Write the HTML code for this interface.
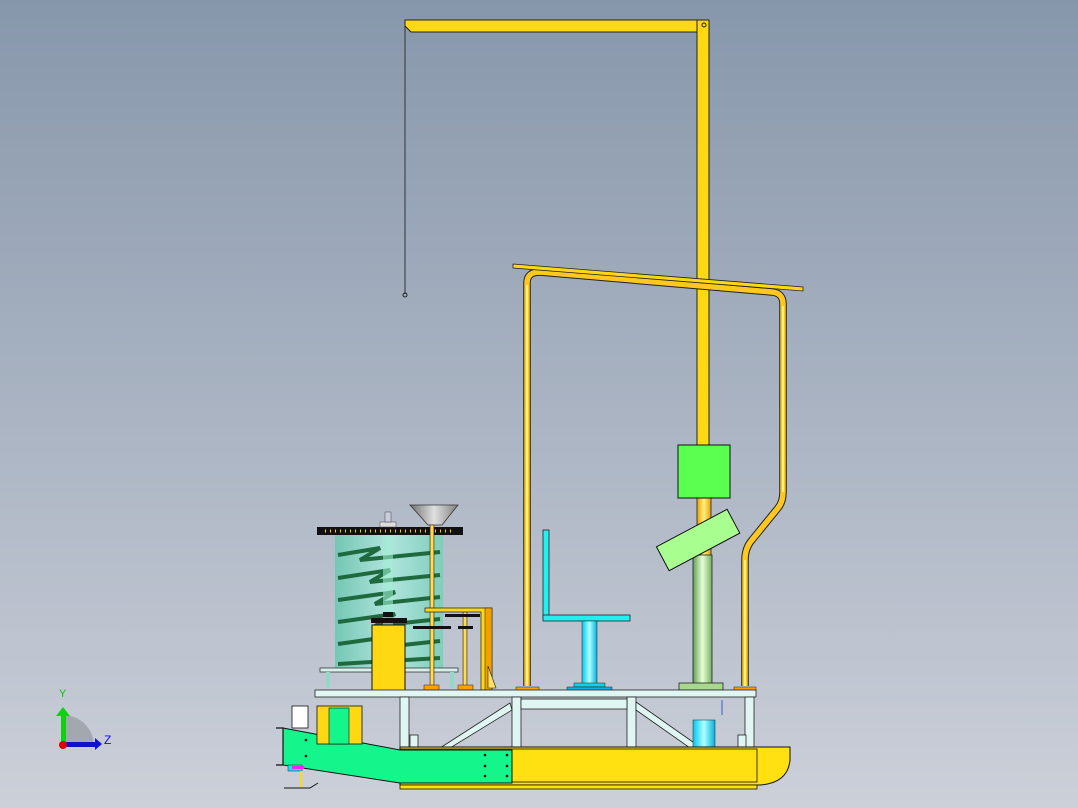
<!DOCTYPE html>
<html><head><meta charset="utf-8"><style>
html,body{margin:0;padding:0;width:1078px;height:808px;overflow:hidden}
svg{display:block}
</style></head><body>
<svg width="1078" height="808" viewBox="0 0 1078 808" xmlns="http://www.w3.org/2000/svg">
<defs>
<linearGradient id="bg" x1="0" y1="0" x2="0" y2="1">
<stop offset="0" stop-color="#8797ab"/><stop offset="0.5" stop-color="#a9b3c2"/><stop offset="1" stop-color="#ccd0d9"/></linearGradient>
<linearGradient id="yp" x1="0" y1="0" x2="1" y2="0">
<stop offset="0" stop-color="#e8a000"/><stop offset="0.5" stop-color="#fff080"/><stop offset="1" stop-color="#e8a000"/></linearGradient>
<linearGradient id="cy" x1="0" y1="0" x2="1" y2="0">
<stop offset="0" stop-color="#00c8f0"/><stop offset="0.5" stop-color="#b0ffff"/><stop offset="1" stop-color="#00b0e0"/></linearGradient>
<linearGradient id="gp" x1="0" y1="0" x2="1" y2="0">
<stop offset="0" stop-color="#60a050"/><stop offset="0.5" stop-color="#e8ffd8"/><stop offset="1" stop-color="#70b060"/></linearGradient>
<linearGradient id="tank" x1="0" y1="0" x2="1" y2="0">
<stop offset="0" stop-color="#6cc8b0"/><stop offset="0.5" stop-color="#b0e8e0"/><stop offset="1" stop-color="#78d0b8"/></linearGradient>
<linearGradient id="fun" x1="0" y1="0" x2="1" y2="0">
<stop offset="0" stop-color="#707070"/><stop offset="0.5" stop-color="#e0e0e0"/><stop offset="1" stop-color="#808080"/></linearGradient>
</defs>
<rect width="1078" height="808" fill="url(#bg)"/>

<line x1="405" y1="26" x2="405" y2="294" stroke="#333" stroke-width="1"/>
<circle cx="405" cy="295" r="2" fill="none" stroke="#222"/>
<polygon points="405,20 709,20 709,32 411,32 405,26" fill="#ffd814" stroke="#222" stroke-width="1"/>
<rect x="697" y="20" width="12" height="426" fill="#ffd814" stroke="#222" stroke-width="1"/>
<circle cx="704" cy="25" r="2" fill="none" stroke="#222"/>

<path d="M527,686 L527,283 Q527,272 540,272 L772,292 Q783,293 783,304 L783,492 Q783,502 778,508 L752,540 Q745,548 745,560 L745,686" fill="none" stroke="#222" stroke-width="7.5"/>
<path d="M527,686 L527,283 Q527,272 540,272 L772,292 Q783,293 783,304 L783,492 Q783,502 778,508 L752,540 Q745,548 745,560 L745,686" fill="none" stroke="#ffc820" stroke-width="5.5"/>
<path d="M527,686 L527,285 M783,492 L783,306 M745,686 L745,560" stroke="#fff080" stroke-width="2"/>
<polygon points="513,264 803,287 803,291 513,268" fill="#ffd814" stroke="#222" stroke-width="0.8"/>

<rect x="697" y="498" width="14" height="60" fill="url(#yp)" stroke="#222" stroke-width="0.8"/>
<rect x="693" y="555" width="19" height="130" fill="url(#gp)" stroke="#222" stroke-width="0.8"/>
<rect x="679" y="683" width="44" height="7" fill="#a8d890" stroke="#222" stroke-width="0.8"/>
<rect x="678" y="445" width="52" height="53" fill="#5aff50" stroke="#111" stroke-width="1"/>
<g transform="rotate(-28 697 540)"><rect x="658" y="527" width="80" height="27" fill="#a8ff90" stroke="#111" stroke-width="1"/></g>

<rect x="543" y="530" width="6" height="88" fill="#20f0f0" stroke="#222" stroke-width="0.8"/>
<rect x="543" y="615" width="87" height="6" fill="#20f0f0" stroke="#222" stroke-width="0.8"/>
<rect x="582" y="621" width="15" height="63" fill="url(#cy)" stroke="#222" stroke-width="0.5"/>
<rect x="574" y="683" width="31" height="4" fill="#10d0f0" stroke="#222" stroke-width="0.5"/>
<rect x="567" y="687" width="45" height="4" fill="#10b0e0" stroke="#222" stroke-width="0.5"/>
<rect x="516" y="687" width="23" height="4" fill="#ffa000" stroke="#222" stroke-width="0.5"/>
<rect x="734" y="687" width="22" height="4" fill="#ffa000" stroke="#222" stroke-width="0.5"/>

<rect x="335" y="535" width="108" height="133" fill="url(#tank)" opacity="0.9"/>
<g stroke="#1e6a3e" stroke-width="4" fill="none">
<path d="M338,555 L380,548 L360,560 L440,552 M338,578 L390,570 L370,582 L440,575 M338,600 L395,592 L375,604 L440,597 M338,622 L395,614 L375,626 L440,619 M338,644 L395,636 L375,648 L440,641 M338,664 L440,658"/>
</g>
<rect x="383" y="535" width="10" height="133" fill="#9ef0d0" opacity="0.6"/>
<rect x="317" y="527" width="146" height="8" fill="#111"/>
<line x1="325" y1="531" x2="455" y2="531" stroke="#ffd000" stroke-width="3" stroke-dasharray="1,4"/>
<rect x="380" y="522" width="16" height="5" fill="#ddd" stroke="#444" stroke-width="0.5"/>
<rect x="385" y="512" width="6" height="10" fill="#ccd" stroke="#444" stroke-width="0.5"/>
<polygon points="410,505 458,505 442,525 428,525" fill="url(#fun)" stroke="#333" stroke-width="0.8"/>
<rect x="320" y="668" width="138" height="4" fill="#d8f0ec" stroke="#222" stroke-width="0.7"/>
<rect x="326" y="672" width="4" height="16" fill="#90d8c8"/>
<rect x="450" y="672" width="4" height="16" fill="#90d8c8"/>
<rect x="430" y="525" width="4" height="162" fill="url(#yp)" stroke="#222" stroke-width="0.5"/>
<rect x="463" y="612" width="4" height="75" fill="url(#yp)" stroke="#222" stroke-width="0.5"/>
<rect x="424" y="685" width="15" height="5" fill="#ffa000" stroke="#222" stroke-width="0.5"/>
<rect x="458" y="685" width="15" height="5" fill="#ffa000" stroke="#222" stroke-width="0.5"/>
<polygon points="425,608 492,608 492,690 481,690 481,612 425,612" fill="#ffd814" stroke="#222" stroke-width="0.7"/>
<rect x="485" y="608" width="7" height="82" fill="#f0a000" stroke="#222" stroke-width="0.5"/>
<polygon points="488,666 496,688 488,688" fill="#ffe060" stroke="#222" stroke-width="0.6"/>
<rect x="413" y="626" width="38" height="3" fill="#111"/>
<rect x="445" y="614" width="35" height="3" fill="#111"/>
<rect x="458" y="626" width="15" height="3" fill="#111"/>
<rect x="372" y="625" width="33" height="66" fill="#ffd814" stroke="#111" stroke-width="1"/>
<rect x="371" y="618" width="36" height="5" fill="#111"/>
<rect x="383" y="612" width="10" height="5" fill="#111"/>

<rect x="315" y="690" width="441" height="7" fill="#e0f6f2" stroke="#222" stroke-width="0.8"/>
<g fill="#e0f6f2" stroke="#222" stroke-width="0.8">
<rect x="400" y="697" width="9" height="52"/>
<rect x="512" y="697" width="9" height="52"/>
<rect x="627" y="697" width="9" height="52"/>
<rect x="745" y="697" width="9" height="52"/>
<rect x="521" y="699" width="106" height="10"/>
<polygon points="440,748 510,703 512,710 450,748"/>
<polygon points="636,702 700,747 690,748 636,710"/>
<rect x="738" y="735" width="8" height="13"/>
<rect x="410" y="735" width="8" height="13"/>
</g>
<rect x="693" y="720" width="22" height="28" fill="url(#cy)" stroke="#222" stroke-width="0.5"/>
<line x1="722" y1="700" x2="722" y2="715" stroke="#3060d0" stroke-width="1"/>

<path d="M400,747 L790,747 L790,760 Q788,783 760,785 L400,785 Z" fill="#ffe010" stroke="#111" stroke-width="1"/>
<rect x="400" y="749" width="357" height="33" fill="none" stroke="#111" stroke-width="0.8"/>
<rect x="400" y="785" width="357" height="4" fill="#ffe010" stroke="#111" stroke-width="0.8"/>
<polygon points="283,728 400,750 512,750 512,783 400,783 283,765" fill="#14f58c" stroke="#111" stroke-width="1"/>
<g fill="#111"><circle cx="306" cy="740" r="1.3"/><circle cx="306" cy="756" r="1.3"/><circle cx="485" cy="755" r="1.3"/><circle cx="485" cy="766" r="1.3"/><circle cx="485" cy="776" r="1.3"/><circle cx="507" cy="755" r="1.3"/><circle cx="507" cy="766" r="1.3"/><circle cx="507" cy="776" r="1.3"/></g>
<rect x="317" y="706" width="45" height="38" fill="#ffd814" stroke="#111" stroke-width="0.8"/>
<rect x="329" y="708" width="20" height="36" fill="#14f58c" stroke="#111" stroke-width="0.6"/>
<rect x="292" y="706" width="16" height="22" fill="#fff" stroke="#111" stroke-width="0.8"/>
<polyline points="276,728 283,728 283,765 276,765" fill="none" stroke="#111" stroke-width="1.2"/>
<rect x="288" y="765" width="14" height="6" fill="#20e0f0" stroke="#222" stroke-width="0.5"/>
<rect x="292" y="766" width="12" height="3" fill="#ff20ff"/>
<line x1="301" y1="771" x2="301" y2="788" stroke="#ffd814" stroke-width="2"/>
<polyline points="284,788 310,788 318,783" fill="none" stroke="#111" stroke-width="1"/>

<path d="M63,745 L63,715 A31,31 0 0 1 94,745 Z" fill="#9a9ea6" opacity="0.8"/>
<rect x="61" y="714" width="5" height="31" fill="#10d010"/>
<polygon points="56,716 63,707 70,716" fill="#10d010"/>
<rect x="63" y="742" width="33" height="5" fill="#1010d0"/>
<polygon points="95,738 102,744 95,750" fill="#1010d0"/>
<circle cx="63" cy="745" r="4" fill="#e00000"/>
<text x="59" y="697" font-family="Liberation Sans, sans-serif" font-size="11" fill="#10c010">Y</text>
<text x="104" y="744" font-family="Liberation Sans, sans-serif" font-size="12" fill="#1010e0">Z</text>
</svg>
</body></html>
